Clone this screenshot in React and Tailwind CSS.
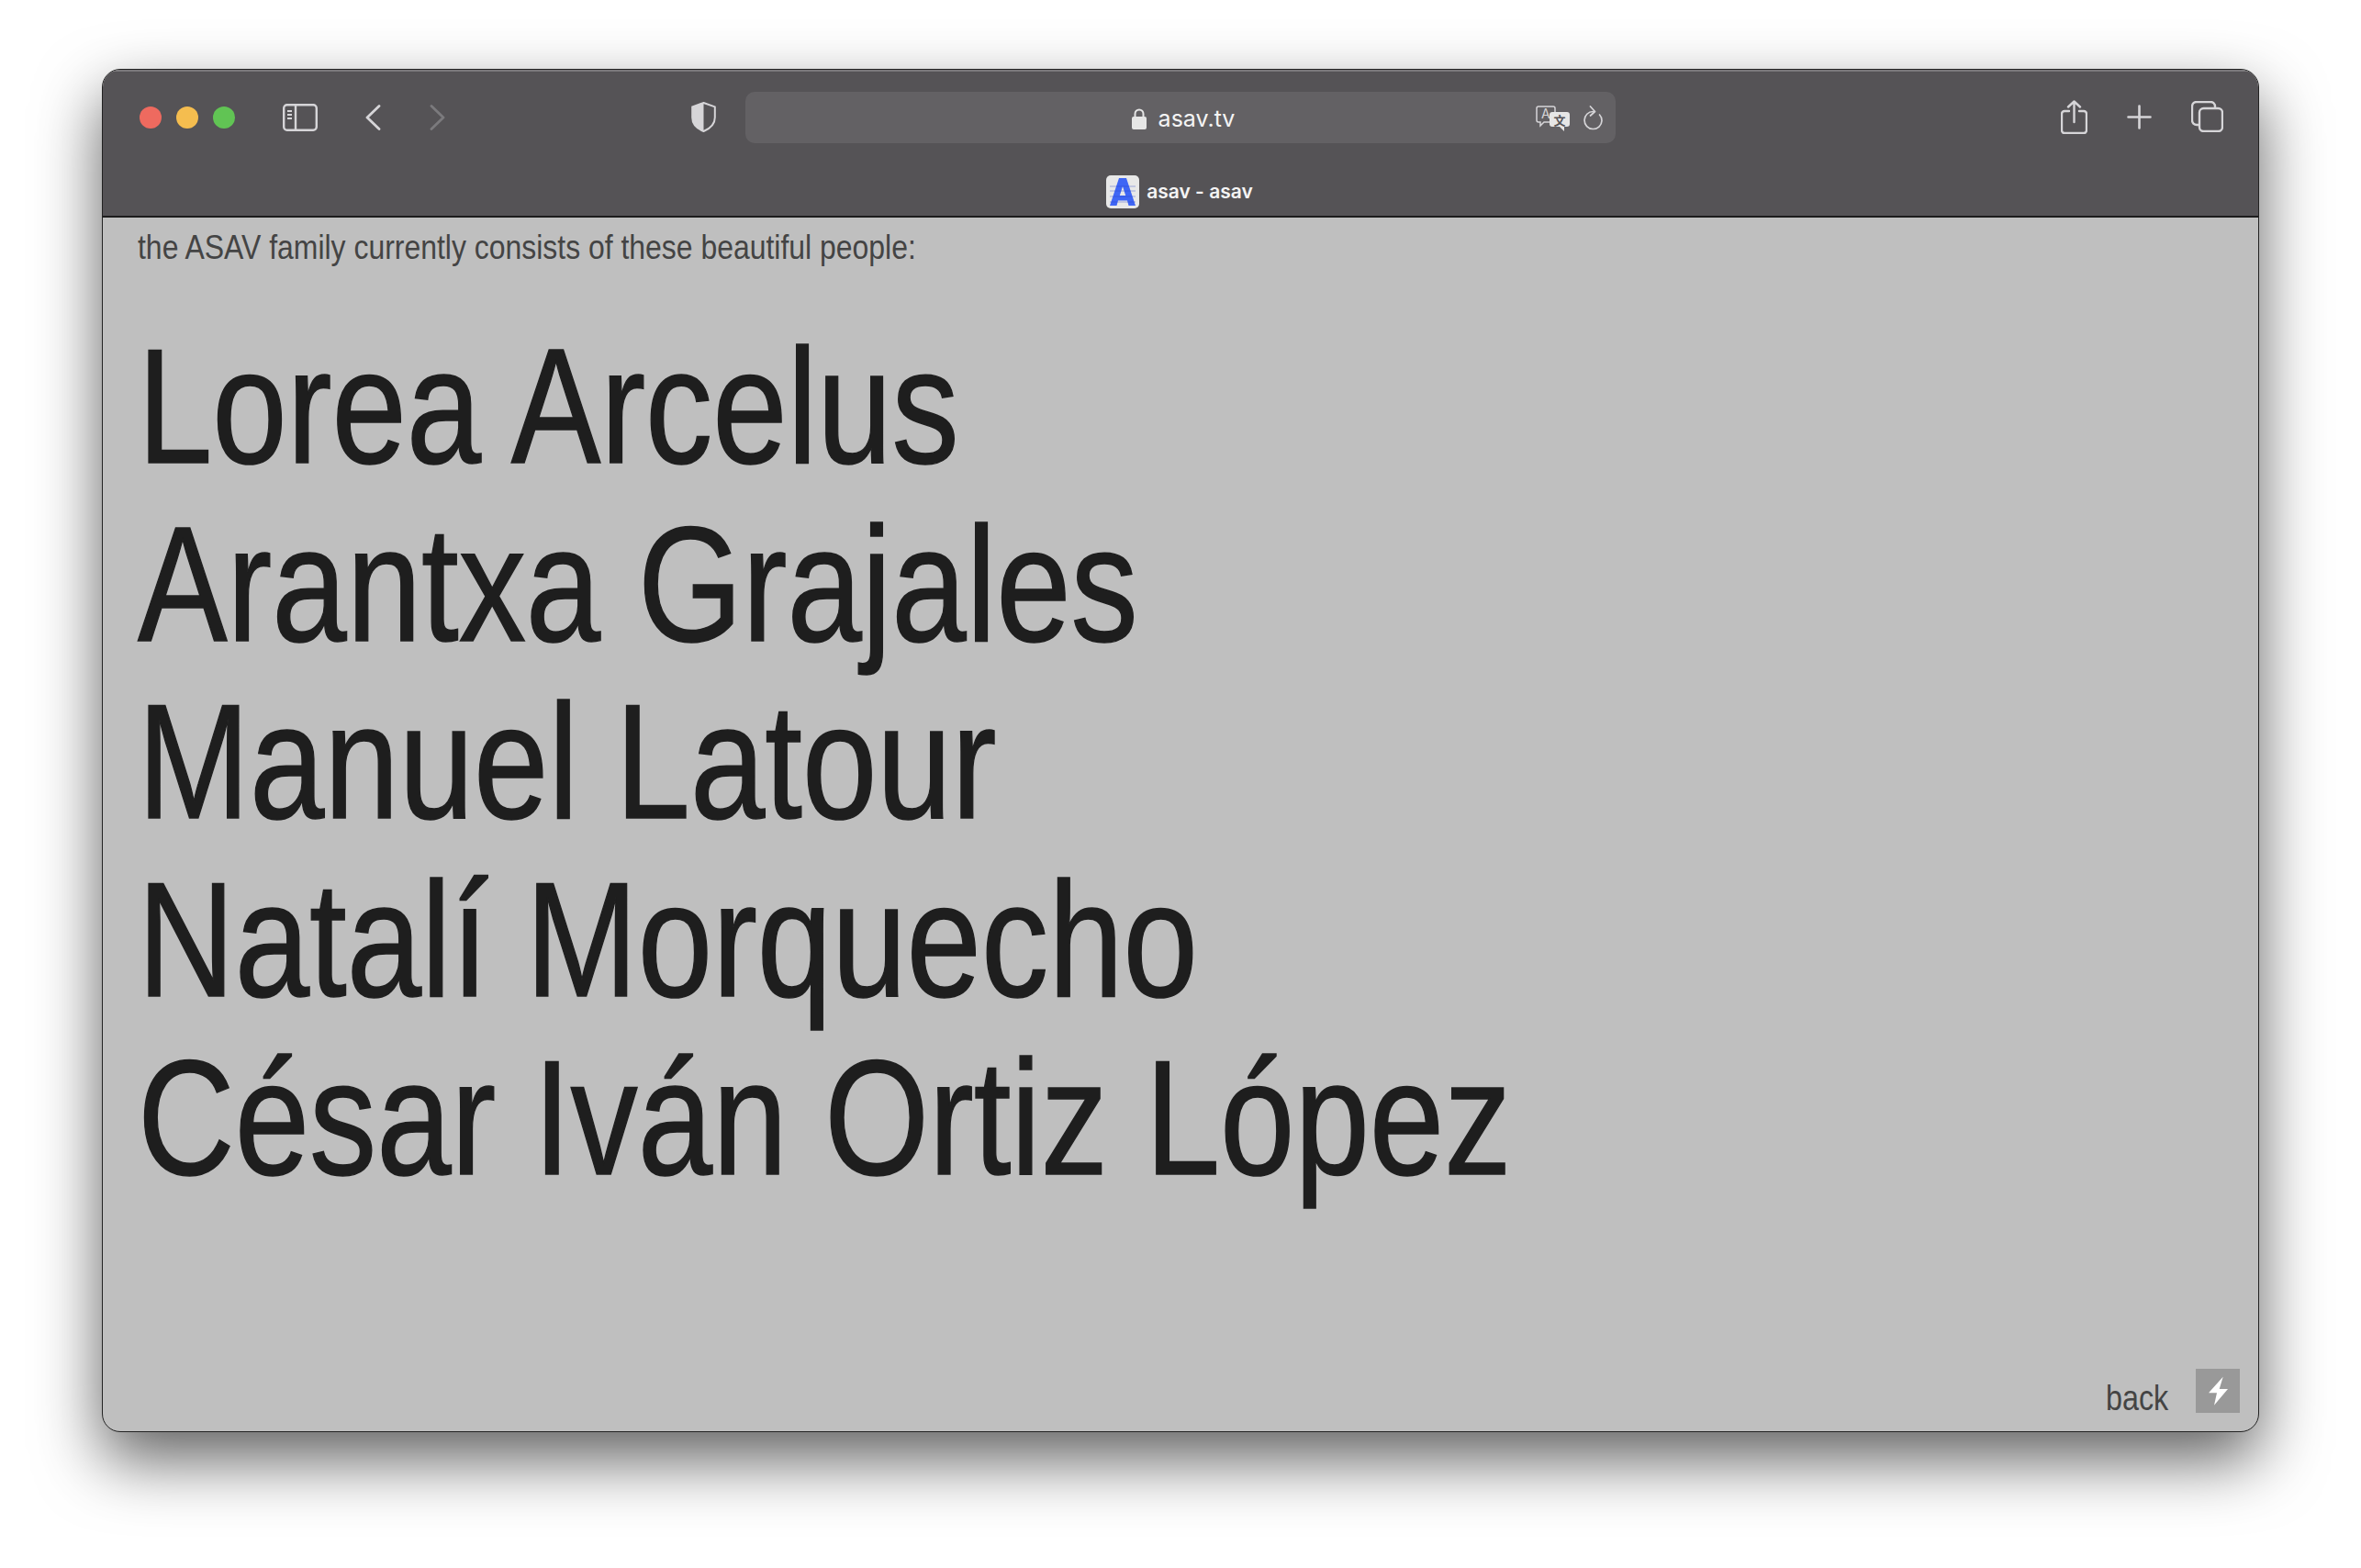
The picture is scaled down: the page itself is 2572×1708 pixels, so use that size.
const names = ['Lorea Arcelus', 'Arantxa Grajales', 'Manuel Latour', 'Natalí Morquecho', 'César Iván Ortiz López'];

function SidebarIcon() {
    return (
        <svg width="38" height="30" viewBox="0 0 38 30" fill="none" stroke="#d6d5d8" strokeWidth="2.4">
            <rect x="1.2" y="1.2" width="35.6" height="27.6" rx="3.5" />
            <path d="M14 1v28" />
            <path d="M5 8h5M5 12h5M5 16h5" strokeWidth="2" />
        </svg>
    );
}

function Chevron({ left, color }) {
    return (
        <svg width="17" height="28" viewBox="0 0 17 28" fill="none" stroke={color} strokeWidth="2.8" strokeLinecap="round" strokeLinejoin="round">
            <path d={left ? 'M15 1.5 2 14l13 12.5' : 'M2 1.5 15 14 2 26.5'} />
        </svg>
    );
}

function ShieldIcon() {
    return (
        <svg width="27" height="33" viewBox="0 0 27 33" fill="none">
            <path d="M13.5 1 25.8 5.4V17c0 7-5 12-12.3 15C6.2 29 1.2 24 1.2 17V5.4z" stroke="#d6d5d8" strokeWidth="2" />
            <path d="M13.5 1 1.2 5.4V17c0 7 5 12 12.3 15z" fill="#d6d5d8" />
        </svg>
    );
}

function LockIcon() {
    return (
        <svg width="16" height="23" viewBox="0 0 16 23" fill="none">
            <path d="M3.5 10V6a4.5 4.5 0 0 1 9 0v4" stroke="#e6e6e6" strokeWidth="2" />
            <rect x="0" y="9" width="16" height="14" rx="2" fill="#e6e6e6" />
        </svg>
    );
}

function TranslateIcon() {
    return (
        <svg width="37" height="28" viewBox="0 0 37 28" fill="none">
            <path d="M3 1h16a2 2 0 0 1 2 2v13a2 2 0 0 1-2 2H9l-4 4v-4H3a2 2 0 0 1-2-2V3a2 2 0 0 1 2-2z" stroke="#d6d5d8" strokeWidth="1.5" />
            <text x="6" y="14" fontSize="14" fill="#d6d5d8" fontFamily="Inter, sans-serif">A</text>
            <path d="M18 7h16a3 3 0 0 1 3 3v10a3 3 0 0 1-3 3h-3v5l-5-5h-8a3 3 0 0 1-3-3V10a3 3 0 0 1 3-3z" fill="#e6e6e6" />
            <text x="19.5" y="20.5" fontSize="13" fontWeight="700" fill="#555356" fontFamily="Noto Sans CJK SC, sans-serif">文</text>
        </svg>
    );
}

function ReloadIcon() {
    return (
        <svg width="21" height="27" viewBox="0 0 21 27" fill="none" stroke="#d6d5d8" strokeWidth="1.7" strokeLinecap="round" strokeLinejoin="round">
            <path d="M10.5 6.500a9.500 9.500 0 1 0 9.500 10c0-2.500-1-5-2.500-6.500" />
            <path d="M7.500 1l5 5.500-5 4.500" />
        </svg>
    );
}

function ShareIcon() {
    return (
        <svg width="29" height="37" viewBox="0 0 29 37" fill="none" stroke="#d6d5d8" strokeWidth="2.4" strokeLinecap="round" strokeLinejoin="round">
            <path d="M9 12H4a3 3 0 0 0-3 3v18a3 3 0 0 0 3 3h21a3 3 0 0 0 3-3V15a3 3 0 0 0-3-3h-5" />
            <path d="M14.500 24V2M8 7.500l6.500-6 6.500 6" />
        </svg>
    );
}

function PlusIcon() {
    return (
        <svg width="27" height="27" viewBox="0 0 27 27" stroke="#d6d5d8" strokeWidth="2.6" strokeLinecap="round">
            <path d="M13.500 1.500v24M1.500 13.500h24" />
        </svg>
    );
}

function TabsIcon() {
    return (
        <svg width="35" height="34" viewBox="0 0 35 34" fill="none" stroke="#d6d5d8" strokeWidth="2.4">
            <path d="M8 26H6a5 5 0 0 1-5-5V6a5 5 0 0 1 5-5h15a5 5 0 0 1 5 5v2" />
            <rect x="9" y="8" width="25" height="25" rx="4.500" />
        </svg>
    );
}

function Favicon() {
    return (
        <svg width="28" height="30" viewBox="0 0 28 30">
            <path d="M10 0h8l10 30h-7.500l-1.500-5.500H9L7.500 30H0z M14 9l-3.200 10h6.400z" fill="#3f66f5" fillRule="evenodd" />
            <path d="M0 9h28M0 14h28M0 20h28M0 26h28" stroke="#2a45c9" strokeWidth="0.8" opacity="0.5" />
        </svg>
    );
}

export default function App() {
    return (
        <div className="min-h-[1708px] bg-white pl-[111px] pt-[75px]">
            {/* Safari window */}
            <div className="flex h-[1485px] w-[2350px] flex-col overflow-hidden rounded-[20px] border border-[#222] bg-[#bfbfbf] shadow-[0_30px_70px_rgba(0,0,0,0.62)]">
                <div className="h-[161px] shrink-0 border-b-2 border-[#1c1c1c] bg-[#555356] shadow-[inset_0_2px_0_rgba(255,255,255,0.22)]">
                    <div className="mt-[24px] flex h-[56px] items-center pl-[40px]">
                        <div className="flex gap-4">
                            <span className="h-6 w-6 rounded-full bg-[#ee6a5f]" />
                            <span className="h-6 w-6 rounded-full bg-[#f5bd4f]" />
                            <span className="h-6 w-6 rounded-full bg-[#61c454]" />
                        </div>
                        <div className="ml-[52px] -mt-[1px] flex"><SidebarIcon /></div>
                        <div className="ml-[52px] -mt-[1px] flex"><Chevron left color="#d6d5d8" /></div>
                        <div className="ml-[53px] -mt-[1px] flex"><Chevron color="#7b7a7d" /></div>
                        <div className="ml-[268px] -mt-[1px] flex"><ShieldIcon /></div>
                        <div className="relative ml-[32px] flex h-[56px] w-[948px] items-center justify-center rounded-[10px] bg-[#636164] pl-[6px] pt-[3px]">
                            <div className="flex items-center gap-[13px]">
                                <LockIcon />
                                <span className="font-['Inter',sans-serif] text-[25px] text-[#f4f4f4]">asav.tv</span>
                            </div>
                            <div className="absolute right-[14px] top-[15px] flex items-start gap-[15px]">
                                <TranslateIcon />
                                <ReloadIcon />
                            </div>
                        </div>
                        <div className="ml-[485px] -mt-[2px] flex"><ShareIcon /></div>
                        <div className="ml-[43px] -mt-[2px] flex"><PlusIcon /></div>
                        <div className="ml-[43px] -mt-[2px] flex"><TabsIcon /></div>
                    </div>
                    <div className="mt-[35px] flex justify-center pr-[2px]">
                        <div className="flex items-center gap-2">
                            <div className="flex h-[36px] w-[36px] items-center justify-center rounded-[5px] bg-[#e8e8e8]"><Favicon /></div>
                            <span className="font-['Inter',sans-serif] text-[21px] font-semibold text-[#f4f4f4]">asav - asav</span>
                        </div>
                    </div>
                </div>

                {/* Page */}
                <div className="flex flex-1 flex-col font-['Liberation_Sans',Arial,sans-serif]">
                    <p className="ml-[38px] mt-[12px] origin-left scale-x-[0.863] whitespace-nowrap text-[37px] leading-[42px] text-[#444]">
                        the ASAV family currently consists of these beautiful people:
                    </p>
                    <div className="ml-[38px] mt-[55px] origin-left scale-x-[0.822] whitespace-nowrap text-[178px] leading-[193.700px] text-[#1e1e1e] [-webkit-text-stroke:1.5px_#1e1e1e]">
                        {names.map((name) => (
                            <div key={name}>{name}</div>
                        ))}
                    </div>
                    <div className="mb-[20px] mr-[20px] mt-auto flex items-end justify-end gap-[30px]">
                        <span className="relative top-[5px] origin-right scale-x-[0.85] text-[38px] leading-[42px] text-[#444]">back</span>
                        <div className="flex h-12 w-12 items-center justify-center bg-[#999]">
                            <svg width="48" height="48" viewBox="0 0 48 48">
                                <path d="M29.700 8.700 14 26.300h9L20 39.700 35 22h-9.300z" fill="#fff" />
                            </svg>
                        </div>
                    </div>
                </div>
            </div>
        </div>
    );
}
